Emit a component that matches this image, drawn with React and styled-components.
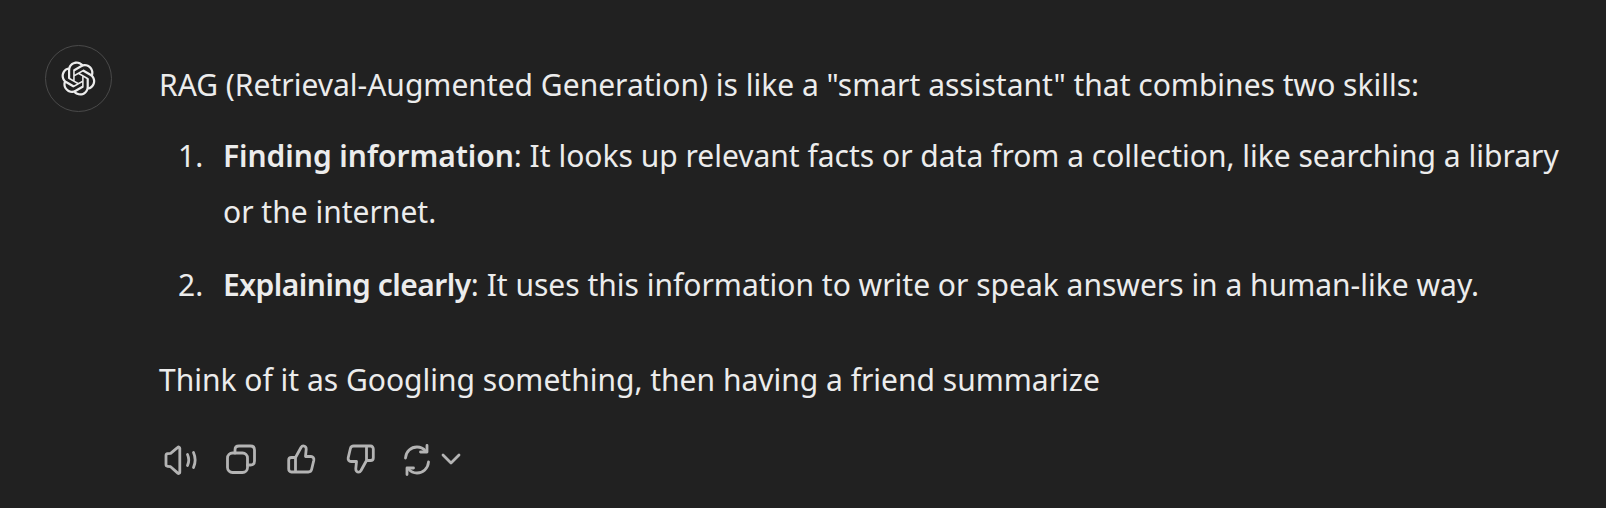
import React from "react";
import styled, { createGlobalStyle } from "styled-components";

const Global = createGlobalStyle`
  html, body { margin: 0; padding: 0; background: #212121; }
  body { width: 1606px; height: 508px; overflow: hidden; }
`;

const Message = styled.div`
  display: flex;
  align-items: flex-start;
  gap: 47px;
  padding: 45px 30px 0 45px;
  font-family: "Noto Sans", "Open Sans", sans-serif;
  font-size: 30px;
  line-height: 56px;
  color: #ececec;
`;
const Avatar = styled.div`
  flex: none;
  width: 67px;
  height: 67px;
  box-sizing: border-box;
  border: 1.5px solid #4a4a4a;
  border-radius: 50%;
  display: flex;
  align-items: center;
  justify-content: center;
  color: #ececec;
`;
const Content = styled.div`
  flex: 1;
  min-width: 0;
  padding-top: 12px;
`;
const Para = styled.p`
  margin: ${(p) => p.$top || 0}px 0 0;
`;
const List = styled.ol`
  list-style: none;
  margin: 15px 0 0;
  padding: 0;
`;
const Item = styled.li`
  display: flex;
  margin-top: ${(p) => p.$top || 0}px;
`;
const Num = styled.span`
  flex: none;
  width: 64px;
  box-sizing: border-box;
  padding-left: 19px;
`;
const Strong = styled.strong`
  font-weight: 600;
  letter-spacing: ${(p) => p.$tight || 0}px;
  color: #ececec;
`;
const Actions = styled.div`
  display: flex;
  align-items: center;
  margin: 34px 0 0 -8px;
  color: #b4b4b4;
`;
const Action = styled.button`
  all: unset;
  flex: none;
  width: 60px;
  height: 36px;
  display: flex;
  align-items: center;
  justify-content: center;
`;
const SplitAction = styled(Action)`
  width: auto;
  justify-content: flex-start;
  gap: 9px;
  padding-left: 11px;
`;

const Svg = ({ w = 36, children }) => (
  <svg width={w} height="36" viewBox={`0 0 ${w} 36`} fill="none" stroke="currentColor" strokeWidth="2.8" strokeLinecap="round" strokeLinejoin="round">
    {children}
  </svg>
);

const thumb = "M9.5 15.5 15 5.5c.6-1 1.200-1.700 2.200-1.700 2 0 3.200 1.500 3 3.500L19.500 14.500h5.500c2 0 3.200 1.800 2.800 3.700l-2.200 9.300c-.4 1.700-1.800 2.500-3.300 2.500H5.500c-1.800 0-2.800-1.200-2.800-3V18c0-1.700 1.200-2.500 2.800-2.500H9.500Zm0 0V30";

const Logo = () => (
  <svg width="35" height="35" viewBox="0 0 41 41" fill="currentColor">
    <path d="M37.5324 16.8707C37.9808 15.5241 38.1363 14.0974 37.9886 12.6859C37.8409 11.2744 37.3934 9.91076 36.676 8.68622C35.6126 6.83404 33.9882 5.3676 32.0373 4.4985C30.0864 3.62941 27.9098 3.40259 25.8215 3.85078C24.8796 2.7893 23.7219 1.94125 22.4257 1.36341C21.1295 0.785575 19.7249 0.491269 18.3058 0.500197C16.1708 0.495044 14.0893 1.16803 12.3614 2.42214C10.6335 3.67624 9.34853 5.44666 8.6917 7.47815C7.30085 7.76286 5.98686 8.3414 4.8377 9.17505C3.68854 10.0087 2.73073 11.0782 2.02839 12.312C0.956464 14.1591 0.498905 16.2988 0.721698 18.4228C0.944492 20.5467 1.83612 22.5449 3.268 24.1293C2.81966 25.4759 2.66413 26.9026 2.81182 28.3141C2.95951 29.7256 3.40701 31.0892 4.12437 32.3138C5.18791 34.1659 6.8123 35.6322 8.76321 36.5013C10.7141 37.3704 12.8907 37.5973 14.9789 37.1492C15.9208 38.2107 17.0786 39.0587 18.3747 39.6366C19.6709 40.2144 21.0755 40.5087 22.4946 40.4998C24.6307 40.5054 26.7133 39.8321 28.4418 38.5772C30.1704 37.3223 31.4556 35.5506 32.1119 33.5179C33.5027 33.2332 34.8167 32.6547 35.9659 31.821C37.115 30.9874 38.0728 29.9178 38.7752 28.684C39.8458 26.8371 40.3023 24.6979 40.0789 22.5748C39.8556 20.4517 38.9639 18.4544 37.5324 16.8707ZM22.4978 37.8849C20.7443 37.8874 19.0459 37.2733 17.6994 36.1501C17.7601 36.117 17.8666 36.0586 17.936 36.0161L25.9004 31.4156C26.1003 31.3019 26.2663 31.137 26.3813 30.9378C26.4964 30.7386 26.5563 30.5124 26.5549 30.2825V19.0542L29.9213 20.998C29.9389 21.0068 29.9541 21.0198 29.9656 21.0359C29.977 21.052 29.9842 21.0707 29.9867 21.0902V30.3889C29.9842 32.375 29.1946 34.2791 27.7909 35.6841C26.3872 37.0892 24.4838 37.8806 22.4978 37.8849ZM6.39227 31.0064C5.51397 29.4888 5.19742 27.7107 5.49804 25.9832C5.55718 26.0187 5.66048 26.0818 5.73461 26.1244L13.699 30.7248C13.8975 30.8408 14.1233 30.902 14.3532 30.902C14.583 30.902 14.8088 30.8408 15.0073 30.7248L24.731 25.1103V28.9979C24.7321 29.0177 24.7283 29.0376 24.7199 29.0556C24.7115 29.0736 24.6988 29.0893 24.6829 29.1012L16.6317 33.7497C14.9096 34.7416 12.8643 35.0097 10.9447 34.4954C9.02506 33.9811 7.38785 32.7263 6.39227 31.0064ZM4.29707 13.6194C5.17156 12.0998 6.55279 10.9364 8.19885 10.3327C8.19885 10.4013 8.19491 10.5228 8.19491 10.6071V19.808C8.19351 20.0378 8.25334 20.2638 8.36823 20.4629C8.48312 20.6619 8.64893 20.8267 8.84863 20.9404L18.5723 26.5542L15.206 28.4979C15.1894 28.5089 15.1703 28.5155 15.1505 28.5173C15.1307 28.5191 15.1107 28.516 15.0924 28.5082L7.04046 23.8557C5.32135 22.8601 4.06716 21.2235 3.55289 19.3046C3.03862 17.3858 3.30624 15.3413 4.29707 13.6194ZM31.955 20.0556L22.2312 14.4411L25.5976 12.4981C25.6142 12.4872 25.6333 12.4805 25.6531 12.4787C25.6729 12.4769 25.6928 12.4801 25.7111 12.4879L33.7631 17.1364C34.9967 17.849 36.0017 18.8982 36.6606 20.1613C37.3194 21.4244 37.6047 22.849 37.4832 24.2684C37.3617 25.6878 36.8382 27.0432 35.9743 28.1759C35.1103 29.3086 33.9415 30.1717 32.6047 30.6641C32.6047 30.5947 32.6047 30.4733 32.6047 30.3889V21.188C32.6066 20.9586 32.5474 20.7328 32.4332 20.5338C32.319 20.3348 32.154 20.1698 31.955 20.0556ZM35.3055 15.0128C35.2464 14.9765 35.1431 14.9142 35.069 14.8717L27.1045 10.2712C26.906 10.1554 26.6803 10.0943 26.4504 10.0943C26.2206 10.0943 25.9948 10.1554 25.7963 10.2712L16.0726 15.8858V11.9982C16.0715 11.9783 16.0753 11.9585 16.0837 11.9405C16.0921 11.9225 16.1048 11.9068 16.1207 11.8949L24.1719 7.25025C25.4053 6.53903 26.8158 6.19376 28.2383 6.25482C29.6608 6.31589 31.0364 6.78077 32.2044 7.59508C33.3723 8.40939 34.2842 9.53945 34.8334 10.8531C35.3826 12.1667 35.5464 13.6095 35.3055 15.0128ZM14.2424 21.9419L10.8752 19.9981C10.8576 19.9893 10.8423 19.9763 10.8309 19.9602C10.8195 19.9441 10.8122 19.9254 10.8098 19.9058V10.6071C10.8107 9.18295 11.2173 7.78848 11.9819 6.58696C12.7466 5.38544 13.8377 4.42659 15.1275 3.82264C16.4173 3.21869 17.8524 2.99464 19.2649 3.1767C20.6775 3.35876 22.0089 3.93941 23.1034 4.85067C23.0427 4.88379 22.937 4.94215 22.8668 4.98473L14.9024 9.58517C14.7025 9.69878 14.5366 9.86356 14.4215 10.0626C14.3065 10.2616 14.2466 10.4877 14.2479 10.7175L14.2424 21.9419ZM16.071 17.9991L20.4018 15.4978L24.7325 17.9975V22.9985L20.4018 25.4983L16.071 22.9985V17.9991Z" />
  </svg>
);

const App = () => (
  <>
    <Global />
    <Message>
      <Avatar><Logo /></Avatar>
      <Content>
        <Para>RAG (Retrieval-Augmented Generation) is like a "smart assistant" that combines two skills:</Para>
        <List>
          <Item>
            <Num>1.</Num>
            <span><Strong $tight={-0.05}>Finding information</Strong>: It looks up relevant facts or data from a collection, like searching a library or the internet.</span>
          </Item>
          <Item $top={17}>
            <Num>2.</Num>
            <span><Strong $tight={-0.5}>Explaining clearly</Strong>: It uses this information to write or speak answers in a human-like way.</span>
          </Item>
        </List>
        <Para $top={39}>Think of it as Googling something, then having a friend summarize</Para>
        <Actions>
          <Action>
            <Svg w={36}>
              <path d="M3 13.500v9c0 1 .7 1.700 1.600 1.800l3 .4 7.200 6.400c.9.8 2 .2 2-.9V6.300c0-1.100-1.100-1.700-2-.9L7.600 11.300l-3 .4C3.700 11.800 3 12.500 3 13.500Z" />
              <path d="M24.500 12.500c1.600 3.500 1.600 7.500 0 11" />
              <path d="M30.500 10.500c2.200 5 2.200 10 0 15" />
            </Svg>
          </Action>
          <Action>
            <Svg w={32}>
              <rect x="2.500" y="11" width="20" height="19.500" rx="5" />
              <path d="M10 11V8C10 5.500 11.500 4 14 4H25.500c2.500 0 4 1.500 4 4v11c0 2.500-1.500 4-4 4h-3" />
            </Svg>
          </Action>
          <Action>
            <Svg w={30}>
              <path d={thumb} />
            </Svg>
          </Action>
          <Action>
            <Svg w={30}>
              <path d={thumb} transform="rotate(180 15 17)" />
            </Svg>
          </Action>
          <SplitAction>
            <Svg w={30}>
              <path d="M3.500 16C4 9.500 9 5 15 5c3.500 0 6.500 1.500 8.500 4" />
              <path d="M26.500 20C26 26.500 21 31 15 31c-3.500 0-6.500-1.500-8.500-4" />
              <path d="M25 3.500V10h-6.500" />
              <path d="M5 32.500V26h6.500" />
            </Svg>
            <Svg w={20}>
              <path d="M2 13l8 8 8-8" />
            </Svg>
          </SplitAction>
        </Actions>
      </Content>
    </Message>
  </>
);

export default App;
